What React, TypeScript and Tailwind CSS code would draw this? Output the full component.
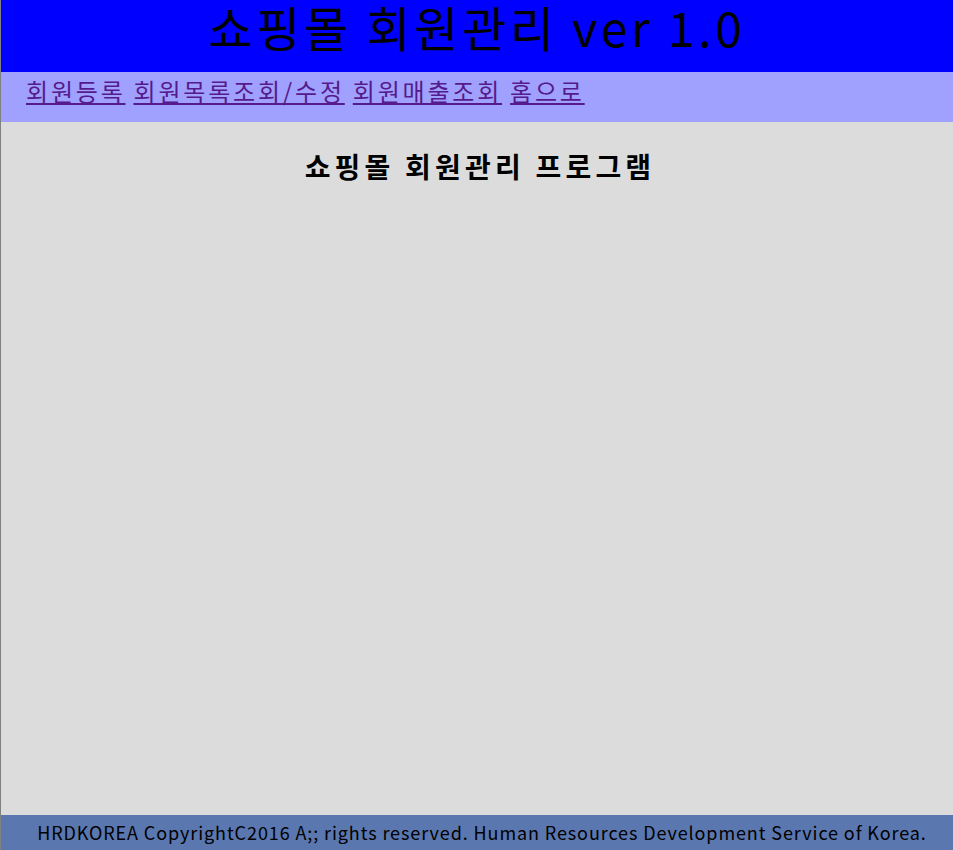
export default function App() {
  const links = ['회원등록', '회원목록조회/수정', '회원매출조회', '홈으로']

  return (
    <div className="flex h-[850px] w-[953px] flex-col border-l border-[#808080] font-['Noto_Sans_CJK_KR','Noto_Sans',sans-serif]">
      {/* header */}
      <header className="flex h-[72px] items-start justify-center bg-[#0000ff]">
        <h1 className="text-[48px] leading-[52px] tracking-[3.7px] text-black">쇼핑몰 회원관리 ver 1.0</h1>
      </header>

      {/* nav */}
      <nav className="flex h-[50px] items-start gap-[8px] bg-[#a0a0ff] pl-[25px] pt-[2px]">
        {links.map((l) => (
          <a key={l} href="#" className="text-[24px] leading-[34px] tracking-[2.8px] text-[#551a8b] underline">
            {l}
          </a>
        ))}
      </nav>

      {/* content */}
      <main className="flex-1 bg-[#dcdcdc] pt-[24px] pl-[6px]">
        <h2 className="text-center text-[28px] font-bold leading-[40px] tracking-[4.2px] text-black">쇼핑몰 회원관리 프로그램</h2>
      </main>

      {/* footer */}
      <footer className="flex h-[35px] items-center justify-center bg-[#5b77b0] pl-[10px]">
        <p className="text-[18px] tracking-[0.9px] text-black">
          HRDKOREA CopyrightC2016 A;; rights reserved. Human Resources Development Service of Korea.
        </p>
      </footer>
    </div>
  )
}
